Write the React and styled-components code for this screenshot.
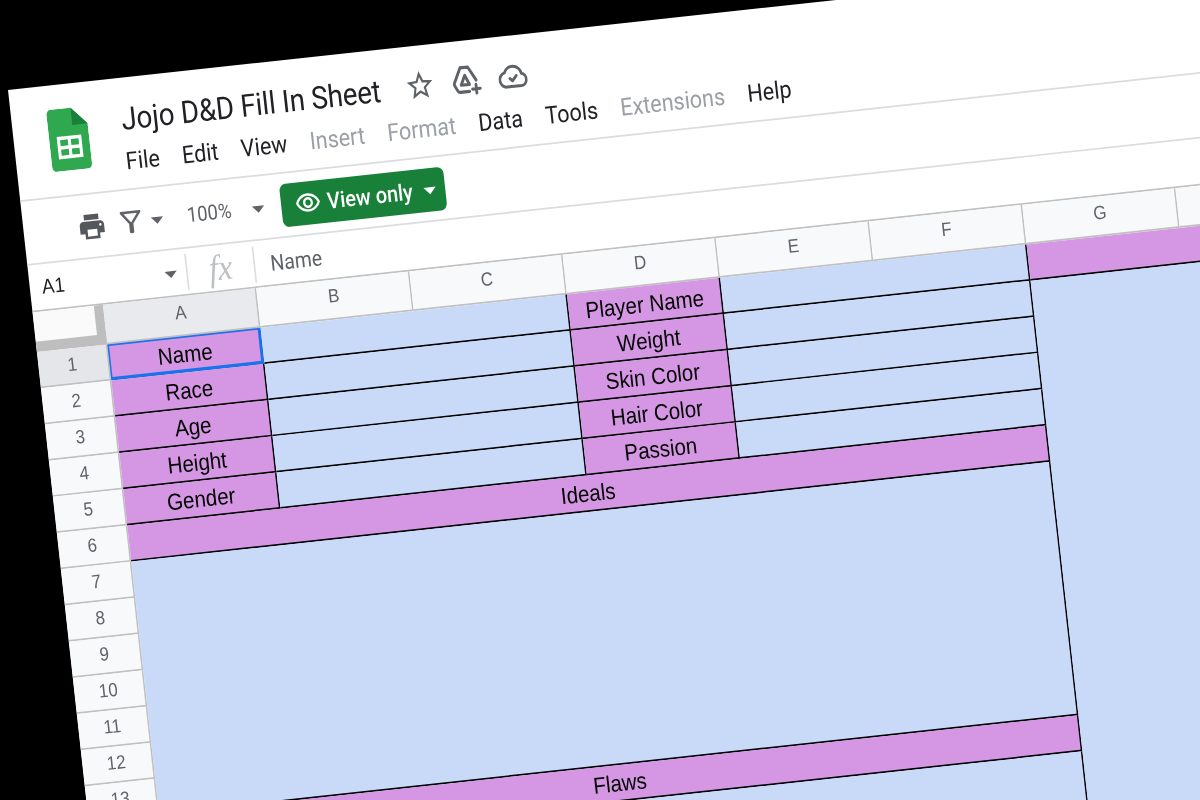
import styled, { createGlobalStyle } from 'styled-components';

const GlobalStyle = createGlobalStyle`
  html, body {
    margin: 0;
    background: #000;
  }
`;

const rowNumbers = Array.from({ length: 24 }, (_, i) => i + 1);
const columns = ['A', 'B', 'C', 'D', 'E', 'F', 'G', 'H', 'I'];
const menus = [
  ['File'], ['Edit'], ['View'], ['Insert', true], ['Format', true],
  ['Data'], ['Tools'], ['Extensions', true], ['Help'],
];
const leftLabels = ['Name', 'Race', 'Age', 'Height', 'Gender'];
const midLabels = ['Player Name', 'Weight', 'Skin Color', 'Hair Color', 'Passion'];

const Page = styled.div`
  width: 1200px;
  height: 800px;
  overflow: hidden;
  background: #000;
  filter: blur(0.4px);
`;

// the whole sheet is a photographed screen, tilted as one piece
const Sheet = styled.div`
  width: 950px;
  height: 560px;
  background: #fff;
  overflow: hidden;
  font-family: Roboto, "Liberation Sans", sans-serif;
  transform-origin: 0 0;
  transform: matrix(1.532, -0.1665, 0.19, 1.724, 8, 90);
`;

const TitleBar = styled.header`
  height: 64px;
  box-sizing: border-box;
  display: flex;
  padding: 14px 0 0 23px;
  gap: 22px;
`;

const Logo = styled.svg`
  width: 26px;
  height: 36px;
  flex: none;
`;

const TitleBlock = styled.div`
  display: flex;
  flex-direction: column;
  margin-top: -2px;
`;

const TitleRow = styled.div`
  display: flex;
  align-items: center;
  height: 22px;
`;

const Title = styled.h1`
  margin: 0 11px 0 0;
  font-size: 18px;
  font-weight: 400;
  letter-spacing: -0.08px;
  color: #202124;
  white-space: nowrap;
`;

const IconSlot = styled.span`
  width: 30px;
  display: flex;
  justify-content: center;
  align-items: center;
`;

const Menu = styled.nav`
  display: flex;
  gap: 14.7px;
  margin-top: 4px;
`;

const MenuItem = styled.span`
  font-size: 14px;
  line-height: 20px;
  color: ${p => (p.$off ? '#9aa0a6' : '#202124')};
`;

const Toolbar = styled.div`
  height: 38px;
  box-sizing: border-box;
  display: flex;
  align-items: center;
  padding-left: 34px;
  border-top: 1px solid #dadce0;
  border-bottom: 1px solid #dadce0;
`;

const ToolSlot = styled.span`
  width: ${p => p.$w}px;
  display: flex;
  justify-content: center;
  align-items: center;
  margin-left: ${p => p.$ml || 0}px;
`;

const Caret = styled.i`
  display: block;
  width: 0;
  height: 0;
  margin-top: ${p => p.$drop || 0}px;
  border-left: 4px solid transparent;
  border-right: 4px solid transparent;
  border-top: 4px solid ${p => p.$color || '#5f6368'};
`;

const Zoom = styled.span`
  font-size: 12px;
  color: #5f6368;
`;

const ViewOnly = styled.div`
  width: 107px;
  height: 25px;
  box-sizing: border-box;
  margin-left: 9px;
  display: flex;
  align-items: center;
  padding-left: 9px;
  gap: 4px;
  border-radius: 4px;
  background: #188038;
  color: #fff;
  font-size: 13px;
  font-weight: 500;
`;

const ButtonCaret = styled.span`
  margin-left: 3px;
`;

const FormulaBar = styled.div`
  height: 26px;
  display: flex;
  align-items: center;
`;

const NameBox = styled.div`
  width: 102px;
  box-sizing: border-box;
  display: flex;
  justify-content: space-between;
  align-items: center;
  padding: 0 6px 0 8px;
  font-family: "Liberation Sans", sans-serif;
  font-size: 12px;
  color: #202124;
`;

const Separator = styled.i`
  display: block;
  width: 1px;
  height: 21px;
  background: #dadce0;
`;

const Fx = styled.span`
  width: 43px;
  text-align: center;
  font-family: "Liberation Serif", serif;
  font-style: italic;
  font-size: 21px;
  line-height: 21px;
  color: #bdc1c6;
`;

const FormulaText = styled.span`
  margin-left: 10px;
  font-size: 12.6px;
  color: #5f6368;
`;

const ColumnHeader = styled.div`
  display: flex;
  height: 24px;
  border-top: 1px solid #c0c0c0;
  box-sizing: border-box;
`;

const Corner = styled.div`
  width: 46px;
  box-sizing: border-box;
  background: #fafafa;
  border-right: 6px solid #bebebe;
  border-bottom: 6px solid #bebebe;
`;

const ColumnCell = styled.div`
  width: 100px;
  box-sizing: border-box;
  display: flex;
  align-items: center;
  justify-content: center;
  padding-bottom: 4px;
  font-family: "Liberation Sans", sans-serif;
  font-size: 11px;
  color: #5f6368;
  background: ${p => (p.$active ? '#e8eaed' : '#f8f9fa')};
  border-right: 1px solid #c0c0c0;
  border-bottom: 1px solid #c0c0c0;
`;

const Body = styled.div`
  display: flex;
`;

const RowHeader = styled.div`
  width: 46px;
  flex: none;
`;

const RowCell = styled.div`
  height: 21px;
  box-sizing: border-box;
  display: flex;
  align-items: center;
  justify-content: center;
  padding: 0 1px 2px 0;
  font-family: "Liberation Sans", sans-serif;
  font-size: 11px;
  color: #5f6368;
  background: ${p => (p.$active ? '#e4e6e9' : '#f8f9fa')};
  border-right: 1px solid #c0c0c0;
  border-bottom: 1px solid #c0c0c0;
`;

const Cells = styled.div`
  display: grid;
  grid-template-columns: repeat(8, 100px);
  grid-auto-rows: 21px;
`;

const Cell = styled.div`
  grid-column: ${p => p.$col} / span ${p => p.$span || 1};
  grid-row: ${p => p.$row} / span ${p => p.$rows || 1};
  box-sizing: border-box;
  display: flex;
  align-items: center;
  justify-content: center;
  font-family: "Liberation Sans", sans-serif;
  font-size: 13.33px;
  color: #000;
  background: ${p => (p.$fill === 'purple' ? '#d597e4' : '#c9daf8')};
  border-right: 1px solid ${p => (p.$noRight ? 'transparent' : '#000')};
  border-bottom: 1px solid ${p => (p.$noBottom ? 'transparent' : '#000')};
`;

const Selected = styled(Cell)`
  border: 2px solid #1a73e8;
  border-width: 1px 2px 2px 1px;
`;

const DriveIcon = () => (
  <svg width="20" height="20" viewBox="0 0 24 24" fill="none" stroke="#5f6368" strokeWidth="2.2" strokeLinejoin="round" strokeLinecap="round">
    <path d="M8.5 3h6l5.5 9.5M8.5 3L3 13q-.6 1.100 0 2.200l2 3.600q.6 1.100 1.800 1.100H14" />
    <path d="M11.500 8.500L8 15h6.500z" />
    <path d="M19.500 15.500v6M16.500 18.500h6" />
  </svg>
);

const CloudIcon = () => (
  <svg width="19" height="19" viewBox="0 0 24 24" fill="none" stroke="#5f6368" strokeWidth="2.2" strokeLinecap="round" strokeLinejoin="round">
    <path d="M6.500 19.500h12a4.500 4.500 0 0 0 .8-8.900 7.300 7.300 0 0 0-13.800-1.600 5.300 5.300 0 0 0 1 10.500z" />
    <path d="M9.500 13.500l2 1.800 3.500-3.500" />
  </svg>
);

const App = () => (
  <Page>
    <GlobalStyle />
    <Sheet>
      <TitleBar>
        <Logo viewBox="0 0 26 36">
          <path d="M16 0H3A3 3 0 0 0 0 3v30a3 3 0 0 0 3 3h20a3 3 0 0 0 3-3V10z" fill="#2fa84f" />
          <path d="M16 0l10 10H16z" fill="#188038" />
          <path d="M5 16h16v13H5zM7 18v3.500h5V18zM14 18v3.500h5V18zM7 23.500V27h5v-3.500zM14 23.500V27h5v-3.500z" fill="#fff" fillRule="evenodd" />
        </Logo>
        <TitleBlock>
          <TitleRow>
            <Title>Jojo D&amp;D Fill In Sheet</Title>
            <IconSlot>
              <svg width="20" height="20" viewBox="0 0 24 24" fill="#5f6368">
                <path d="M22 9.240l-7.190-.620L12 2 9.190 8.630 2 9.240l5.460 4.730L5.820 21 12 17.270 18.180 21l-1.630-7.030L22 9.240zM12 15.400l-3.760 2.270 1-4.280-3.320-2.880 4.380-.380L12 6.100l1.710 4.040 4.380.380-3.320 2.880 1 4.280L12 15.400z" />
              </svg>
            </IconSlot>
            <IconSlot><DriveIcon /></IconSlot>
            <IconSlot><CloudIcon /></IconSlot>
          </TitleRow>
          <Menu>
            {menus.map(([label, off]) => (
              <MenuItem key={label} $off={off}>{label}</MenuItem>
            ))}
          </Menu>
        </TitleBlock>
      </TitleBar>

      <Toolbar>
        <ToolSlot $w={20}>
          <svg width="19" height="19" viewBox="0 0 24 24" fill="#54585d">
            <path d="M19 8H5c-1.660 0-3 1.340-3 3v6h4v4h12v-4h4v-6c0-1.660-1.340-3-3-3zm-3 11H8v-5h8v5zm3-7c-.550 0-1-.450-1-1s.450-1 1-1 1 .450 1 1-.450 1-1 1zm-1-9H6v4h12V3z" />
          </svg>
        </ToolSlot>
        <ToolSlot $w={20} $ml={6}>
          <svg width="16" height="16" viewBox="0 0 24 24" fill="none" stroke="#5f6368" strokeWidth="2.200" strokeLinejoin="round">
            <path d="M3 4h18l-8 9.500V21h-2v-7.500z" />
          </svg>
        </ToolSlot>
        <ToolSlot $w={13}><Caret $drop={2} /></ToolSlot>
        <ToolSlot $w={42} $ml={7}><Zoom>100%</Zoom></ToolSlot>
        <ToolSlot $w={13} $ml={4}><Caret $drop={1} /></ToolSlot>
        <ViewOnly>
          <svg width="17" height="17" viewBox="0 0 24 24" fill="#fff">
            <path d="M12 6c3.790 0 7.170 2.130 8.820 5.500C19.170 14.870 15.790 17 12 17s-7.170-2.130-8.820-5.500C4.830 8.130 8.210 6 12 6m0-2C7 4 2.730 7.110 1 11.500 2.730 15.890 7 19 12 19s9.270-3.110 11-7.500C21.270 7.110 17 4 12 4zm0 5c1.380 0 2.500 1.120 2.500 2.500S13.380 14 12 14s-2.500-1.120-2.500-2.500S10.620 9 12 9m0-2c-2.480 0-4.500 2.020-4.500 4.500S9.520 16 12 16s4.500-2.020 4.500-4.500S14.480 7 12 7z" />
          </svg>
          View only
          <ButtonCaret><Caret $color="#fff" $drop={1} /></ButtonCaret>
        </ViewOnly>
      </Toolbar>

      <FormulaBar>
        <NameBox>A1 <Caret $drop={1} /></NameBox>
        <Separator />
        <Fx>fx</Fx>
        <Separator />
        <FormulaText>Name</FormulaText>
      </FormulaBar>

      <ColumnHeader>
        <Corner />
        {columns.map((c, i) => (
          <ColumnCell key={c} $active={i === 0}>{c}</ColumnCell>
        ))}
      </ColumnHeader>

      <Body>
        <RowHeader>
          {rowNumbers.map(n => (
            <RowCell key={n} $active={n === 1}>{n}</RowCell>
          ))}
        </RowHeader>
        <Cells>
          {leftLabels.map((label, i) => {
            const Part = i === 0 ? Selected : Cell;
            return <Part key={label} $col={1} $row={i + 1} $fill="purple">{label}</Part>;
          })}
          {leftLabels.map((label, i) => (
            <Cell key={label} $col={2} $span={2} $row={i + 1} />
          ))}
          {midLabels.map((label, i) => (
            <Cell key={label} $col={4} $row={i + 1} $fill="purple">{label}</Cell>
          ))}
          {midLabels.map((label, i) => (
            <Cell key={label} $col={5} $span={2} $row={i + 1} />
          ))}
          <Cell $col={1} $span={6} $row={6} $fill="purple">Ideals</Cell>
          <Cell $col={1} $span={6} $row={7} $rows={7} />
          <Cell $col={1} $span={6} $row={14} $fill="purple">Flaws</Cell>
          <Cell $col={1} $span={6} $row={15} $rows={10} />
          <Cell $col={7} $span={2} $row={1} $fill="purple" $noRight />
          <Cell $col={7} $span={2} $row={2} $rows={23} $noRight $noBottom />
        </Cells>
      </Body>
    </Sheet>
  </Page>
);

export default App;
